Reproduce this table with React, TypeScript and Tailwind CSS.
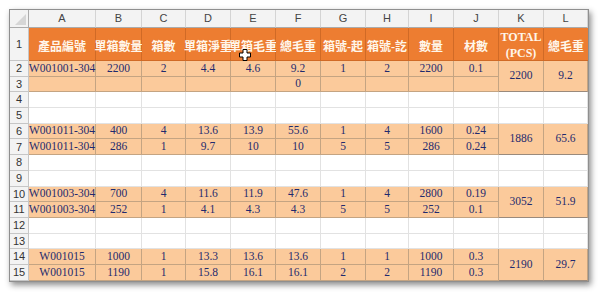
const COLS = ["A", "B", "C", "D", "E", "F", "G", "H", "I", "J", "K", "L"];

const HEADERS = ["產品編號", "單箱數量", "箱數", "單箱淨重", "單箱毛重", "總毛重", "箱號-起", "箱號-訖", "數量", "材數"];

type Group = { a: string[]; b: string[]; total: string; weight: string };

// Each group fills two rows, K and L are merged across them.
const GROUPS: Group[] = [
  {
    a: ["W001001-304", "2200", "2", "4.4", "4.6", "9.2", "1", "2", "2200", "0.1"],
    b: ["", "", "", "", "", "0", "", "", "", ""],
    total: "2200",
    weight: "9.2",
  },
  {
    a: ["W001011-304", "400", "4", "13.6", "13.9", "55.6", "1", "4", "1600", "0.24"],
    b: ["W001011-304", "286", "1", "9.7", "10", "10", "5", "5", "286", "0.24"],
    total: "1886",
    weight: "65.6",
  },
  {
    a: ["W001003-304", "700", "4", "11.6", "11.9", "47.6", "1", "4", "2800", "0.19"],
    b: ["W001003-304", "252", "1", "4.1", "4.3", "4.3", "5", "5", "252", "0.1"],
    total: "3052",
    weight: "51.9",
  },
  {
    a: ["W001015", "1000", "1", "13.3", "13.6", "13.6", "1", "1", "1000", "0.3"],
    b: ["W001015", "1190", "1", "15.8", "16.1", "16.1", "2", "2", "1190", "0.3"],
    total: "2190",
    weight: "29.7",
  },
];

const serif = "font-['Liberation_Serif','Noto_Sans_CJK_TC',serif]";
const sans = "font-['Liberation_Sans','Noto_Sans',sans-serif]";

function RowNum({ n }: { n: number }) {
  return (
    <div
      className={`flex items-center justify-center border-r border-b border-[#c6c6c6] bg-[#f3f3f3] text-[11px] text-[#333] ${sans}`}
    >
      {n}
    </div>
  );
}

function Data({ value, top, wrap }: { value: string; top?: boolean; wrap?: boolean }) {
  return (
    <div
      className={`flex items-center justify-center overflow-visible whitespace-nowrap border-r border-b border-[#c4a482] bg-[#fbca9b] text-[11.5px] leading-none text-[#1f2a6e] ${serif} ${
        top ? "border-t border-t-[#9a8a7c]" : ""
      } ${wrap ? "row-span-2 border-b-[#9a8a7c]" : ""}`}
    >
      {value}
    </div>
  );
}

function EmptyRow({ n }: { n: number }) {
  return (
    <>
      <RowNum n={n} />
      {COLS.map((c) => (
        <div key={c} className="border-r border-b border-[#e2e2e2] bg-white" />
      ))}
    </>
  );
}

function CellCursor() {
  return (
    <svg
      className="absolute left-[229px] top-[39px]"
      width="12"
      height="12"
      viewBox="0 0 12 12"
    >
      <path
        d="M4 0.5h4v3.5h3.5v4H8v3.5H4V8H0.5V4H4z"
        fill="#fff"
        stroke="#000"
        strokeWidth="1"
      />
    </svg>
  );
}

export default function App() {
  let row = 2;
  return (
    <div className="h-[294px] w-[600px] bg-white pl-[9px] pt-[9px]">
      <div className="relative w-fit border border-[#8f8f8f] shadow-[2px_3px_6px_rgba(0,0,0,0.45)]">
        <div className="grid grid-cols-[19px_67px_46px_44px_45px_45px_45px_45px_43px_45px_45px_45px_44px] grid-rows-[18px_33px_repeat(14,15.7px)]">
          {/* corner */}
          <div className="relative border-r border-b border-[#ababab] bg-[#f3f3f3]">
            <svg className="absolute bottom-[2px] right-[2px]" width="11" height="11" viewBox="0 0 11 11">
              <path d="M11 0V11H0z" fill="#d6d6d6" />
            </svg>
          </div>
          {COLS.map((c) => (
            <div
              key={c}
              className={`flex items-center justify-center border-r border-b border-[#ababab] border-r-[#d4d4d4] bg-[#f3f3f3] text-[11px] text-[#444] ${sans}`}
            >
              {c}
            </div>
          ))}

          {/* header row */}
          <RowNum n={1} />
          {HEADERS.map((h) => (
            <div
              key={h}
              className={`flex items-center justify-center overflow-visible whitespace-nowrap border-r border-b border-[#d06a26] bg-[#ed7d31] pt-[5px] text-[12px] font-semibold text-[#fff6ea] ${serif}`}
            >
              {h}
            </div>
          ))}
          <div
            className={`flex flex-col items-center justify-center border-r border-b border-[#d06a26] bg-[#ed7d31] pt-[2px] text-[12px] font-semibold leading-[16px] text-[#fff6ea] ${serif}`}
          >
            <span>TOTAL</span>
            <span>(PCS)</span>
          </div>
          <div
            className={`flex items-center justify-center border-b border-[#d06a26] bg-[#ed7d31] pt-[5px] text-[12px] font-semibold text-[#fff6ea] ${serif}`}
          >
            總毛重
          </div>

          {GROUPS.map((g, gi) => {
            const r1 = row;
            row += 4;
            return (
              <div key={gi} className="contents">
                <RowNum n={r1} />
                {g.a.map((v, i) => (
                  <Data key={i} value={v} />
                ))}
                <Data value={g.total} wrap />
                <Data value={g.weight} wrap />
                <RowNum n={r1 + 1} />
                {g.b.map((v, i) => (
                  <Data key={i} value={v} />
                ))}
                {gi < GROUPS.length - 1 && (
                  <>
                    <EmptyRow n={r1 + 2} />
                    <EmptyRow n={r1 + 3} />
                  </>
                )}
              </div>
            );
          })}
        </div>
        <CellCursor />
      </div>
    </div>
  );
}
